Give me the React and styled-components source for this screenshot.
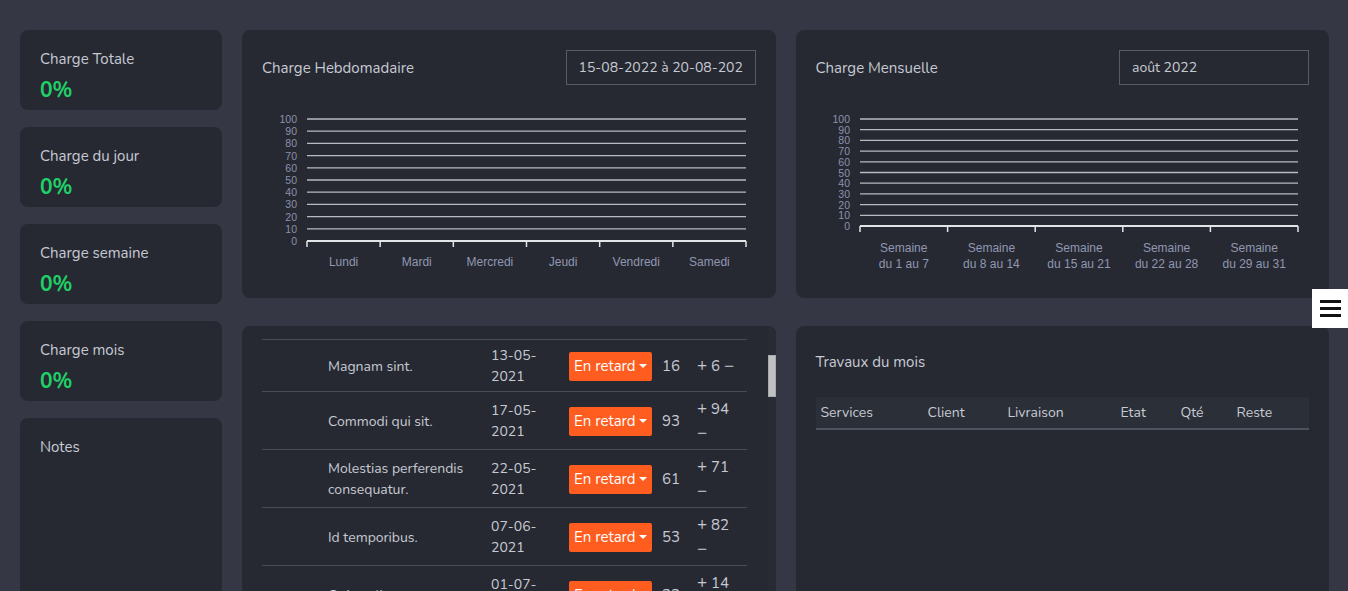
import React, { useLayoutEffect, useRef } from 'react';
import styled, { createGlobalStyle } from 'styled-components';

const GlobalStyle = createGlobalStyle`
  html, body {
    margin: 0;
    padding: 0;
    background: #353844;
    overflow: hidden;
  }
  body {
    font-family: "Nunito", "Lato", "Noto Sans", sans-serif;
    color: #c6cad3;
  }
  * { box-sizing: border-box; }
`;

const Page = styled.div`
  display: grid;
  grid-template-columns: 202px 1fr 1fr;
  column-gap: 20px;
  padding: 30px 19px 0 20px;
`;

const Column = styled.div`
  display: flex;
  flex-direction: column;
  gap: ${(p) => p.gap}px;
  min-width: 0;
`;

const StatCard = styled.div`
  background: #262932;
  border-radius: 8px;
  height: ${(p) => p.h || 80}px;
  padding: 19px 20px;
`;

const StatLabel = styled.div`
  font-size: 15px;
  line-height: 20px;
`;

const StatValue = styled.div`
  margin-top: 10px;
  font-size: 21px;
  line-height: 22px;
  font-weight: 700;
  color: #1fd167;
`;

const Panel = styled.div`
  background: #262932;
  border-radius: 8px;
  padding: 20px;
  height: ${(p) => p.h}px;
`;

const PanelHead = styled.div`
  display: flex;
  align-items: center;
  justify-content: space-between;
  height: 35px;
`;

const PanelTitle = styled.div`
  font-size: 15px;
  line-height: 20px;
`;

const DateInput = styled.input`
  width: 190px;
  height: 35px;
  border: 1px solid #565b67;
  background: transparent;
  color: #c6cad3;
  font-family: inherit;
  font-size: 14px;
  padding: 0 12px;
  outline: none;
`;

const ChartSvg = styled.svg`
  display: block;
  margin-top: 20px;
  overflow: visible;
`;

const ListPanel = styled.div`
  display: flex;
  background: #262932;
  border-radius: 8px;
  height: 330px;
  overflow: hidden;
`;

const ListScroll = styled.div`
  position: relative;
  flex: 1;
  min-width: 0;
  overflow: hidden;
  padding: 0 21px 0 20px;
`;

const Track = styled.div`
  width: 8px;
  flex: none;
  background: #282b34;
`;

const Thumb = styled.div`
  width: 8px;
  height: 42px;
  margin-top: 29px;
  background: #c1c1c3;
  border: 1px solid #a9aab0;
`;

const TablePanel = styled.div`
  background: #262932;
  border-radius: 8px;
  height: 330px;
  padding: 26px 20px;
`;

const TableTitle = styled.div`
  font-size: 15px;
  line-height: 20px;
  margin-bottom: 25px;
  padding-top: ${(p) => p.pt || 0}px;
`;

const HeadRow = styled.div`
  display: grid;
  grid-template-columns: 107px 80px 113px 60px 56px 1fr;
  align-items: center;
  height: 33px;
  background: #2b2f38;
  border-bottom: 2px solid #4e5360;
  font-size: 14px;
`;

const HeadCell = styled.div`
  padding-left: 5px;
`;

const TaskRow = styled.div`
  display: grid;
  grid-template-columns: 66px 163px 78px 93px 35px 44px;
  align-items: center;
  padding: 5px 0 4px;
  border-top: 1px solid #474c57;
  font-size: 14px;
  line-height: 21px;
`;

const Badge = styled.div`
  display: inline-flex;
  align-items: center;
  justify-content: space-between;
  width: 83px;
  height: 29px;
  padding: 0 5px 0 5px;
  background: #ff5c1f;
  color: #fff;
  font-size: 15px;
  border-radius: 2px;
`;

const Caret = styled.span`
  width: 0;
  height: 0;
  border-left: 4px solid transparent;
  border-right: 4px solid transparent;
  border-top: 4px solid #fff;
`;

const Qty = styled.div`
  font-size: 15px;
`;

const Actions = styled.div`
  font-size: 15px;
  line-height: 24px;
`;

const Act = styled.span`
  font-size: 17px;
`;

const Burger = styled.div`
  position: fixed;
  right: 0;
  top: 289px;
  width: 36px;
  height: 39px;
  background: #fff;
  display: flex;
  flex-direction: column;
  align-items: center;
  justify-content: center;
  gap: 4px;
`;

const Bar = styled.span`
  width: 21px;
  height: 3px;
  background: #111;
`;

const Chart = ({ width, height, top, bottom, left, right, labels, labelY }) => {
  const steps = [100, 90, 80, 70, 60, 50, 40, 30, 20, 10, 0];
  const step = (bottom - top) / 10;
  const colW = (right - left) / labels.length;
  return (
    <ChartSvg width={width} height={height}>
      {steps.map((v, i) => {
        const y = top + i * step;
        return (
          <g key={v}>
            <text x={left - 10} y={y} textAnchor="end" dominantBaseline="central"
              fontFamily="Liberation Sans, Arial, sans-serif" fontSize="10.5" fill="#8c91aa">
              {v}
            </text>
            {v !== 0 && (
              <line x1={left} x2={right} y1={y} y2={y} stroke="#b7bac1" strokeWidth="1.3" />
            )}
          </g>
        );
      })}
      <line x1={left} x2={right} y1={bottom} y2={bottom} stroke="#e3e4e7" strokeWidth="2" />
      {labels.map((_, i) => (
        <line key={i} x1={left + i * colW} x2={left + i * colW} y1={bottom} y2={bottom + 6}
          stroke="#e3e4e7" strokeWidth="1.5" />
      ))}
      <line x1={right} x2={right} y1={bottom} y2={bottom + 6} stroke="#e3e4e7" strokeWidth="1.5" />
      {labels.map((lines, i) =>
        lines.map((t, j) => (
          <text key={i + '-' + j} x={left + colW * (i + 0.5)} y={labelY + j * 16}
            textAnchor="middle" dominantBaseline="central"
            fontFamily="Liberation Sans, Arial, sans-serif" fontSize="12" fill="#9197b1">
            {t}
          </text>
        ))
      )}
    </ChartSvg>
  );
};

const tasks = [
  ['Voluptas aut.', '02-05-2021', 41, 12],
  ['Nihil cumque.', '08-05-2021', 27, 35],
  ['Magnam sint.', '13-05-2021', 16, 6],
  ['Commodi qui sit.', '17-05-2021', 93, 94],
  ['Molestias perferendis consequatur.', '22-05-2021', 61, 71],
  ['Id temporibus.', '07-06-2021', 53, 82],
  ['Quia velit.', '01-07-2021', 33, 14],
  ['Et dolorem.', '09-07-2021', 48, 27],
  ['Rerum odit.', '15-07-2021', 72, 58],
];

const App = () => {
  const scrollRef = useRef(null);
  const firstRef = useRef(null);

  // the list is shown scrolled a little, as in the reference
  useLayoutEffect(() => {
    if (scrollRef.current && firstRef.current) {
      scrollRef.current.scrollTop = firstRef.current.offsetTop - 13;
    }
  }, []);

  return (
    <>
      <GlobalStyle />
      <Page>
        <Column gap={17}>
          <StatCard>
            <StatLabel>Charge Totale</StatLabel>
            <StatValue>0%</StatValue>
          </StatCard>
          <StatCard>
            <StatLabel>Charge du jour</StatLabel>
            <StatValue>0%</StatValue>
          </StatCard>
          <StatCard>
            <StatLabel>Charge semaine</StatLabel>
            <StatValue>0%</StatValue>
          </StatCard>
          <StatCard>
            <StatLabel>Charge mois</StatLabel>
            <StatValue>0%</StatValue>
          </StatCard>
          <StatCard h={220}>
            <StatLabel>Notes</StatLabel>
          </StatCard>
        </Column>

        <Column gap={28}>
          <Panel h={268}>
            <PanelHead>
              <PanelTitle>Charge Hebdomadaire</PanelTitle>
              <DateInput readOnly defaultValue="15-08-2022 à 20-08-2022" />
            </PanelHead>
            <Chart width={493} height={175} top={14} bottom={136} left={45} right={484} labelY={157}
              labels={[['Lundi'], ['Mardi'], ['Mercredi'], ['Jeudi'], ['Vendredi'], ['Samedi']]} />
          </Panel>
          <ListPanel>
            <ListScroll ref={scrollRef}>
              <TableTitle pt={26}>Travaux de la semaine</TableTitle>
              <HeadRow>
                <HeadCell>Services</HeadCell>
                <HeadCell>Client</HeadCell>
                <HeadCell>Livraison</HeadCell>
                <HeadCell>Etat</HeadCell>
                <HeadCell>Qté</HeadCell>
                <HeadCell>Reste</HeadCell>
              </HeadRow>
              {tasks.map(([name, date, qty, rest], i) => (
                <TaskRow key={i} ref={i === 2 ? firstRef : undefined}>
                  <div />
                  <div>{name}</div>
                  <div>{date.slice(0, 6)}<br />{date.slice(6)}</div>
                  <div>
                    <Badge>En retard <Caret /></Badge>
                  </div>
                  <Qty>{qty}</Qty>
                  <Actions>
                    <Act>+</Act> {rest} <Act>−</Act>
                  </Actions>
                </TaskRow>
              ))}
            </ListScroll>
            <Track>
              <Thumb />
            </Track>
          </ListPanel>
        </Column>

        <Column gap={28}>
          <Panel h={268}>
            <PanelHead>
              <PanelTitle>Charge Mensuelle</PanelTitle>
              <DateInput readOnly defaultValue="août 2022" />
            </PanelHead>
            <Chart width={493} height={175} top={14} bottom={121} left={44} right={482} labelY={143}
              labels={[
                ['Semaine', 'du 1 au 7'],
                ['Semaine', 'du 8 au 14'],
                ['Semaine', 'du 15 au 21'],
                ['Semaine', 'du 22 au 28'],
                ['Semaine', 'du 29 au 31'],
              ]} />
          </Panel>
          <TablePanel>
            <TableTitle>Travaux du mois</TableTitle>
            <HeadRow>
              <HeadCell>Services</HeadCell>
              <HeadCell>Client</HeadCell>
              <HeadCell>Livraison</HeadCell>
              <HeadCell>Etat</HeadCell>
              <HeadCell>Qté</HeadCell>
              <HeadCell>Reste</HeadCell>
            </HeadRow>
          </TablePanel>
        </Column>
      </Page>
      <Burger>
        <Bar />
        <Bar />
        <Bar />
      </Burger>
    </>
  );
};

export default App;
